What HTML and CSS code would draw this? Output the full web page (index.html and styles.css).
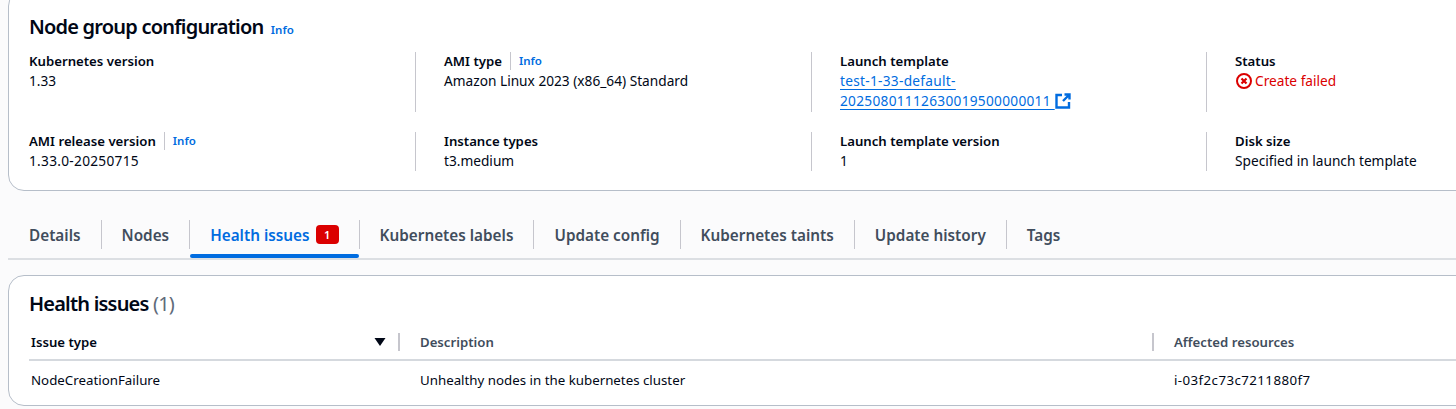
FILE: index.html
```html
<!DOCTYPE html>
<html lang="en">
<head>
<meta charset="utf-8">
<title>Node group configuration</title>
<link rel="stylesheet" href="styles.css">
</head>
<body>
<main class="page">
  <section class="card config">
    <h2 class="title">Node group configuration <a class="info title-info">Info</a></h2>
    <div class="grid row-one">
      <div class="cell first"><div class="label">Kubernetes version</div><div class="value">1.33</div></div>
      <div class="cell"><div class="label">AMI type<span class="pipe"></span><a class="info">Info</a></div><div class="value">Amazon Linux 2023 (x86_64) Standard</div></div>
      <div class="cell">
        <div class="label">Launch template</div>
        <div class="value"><a class="link num">test-1-33-default-<br>20250801112630019500000011 </a><svg class="ext" width="16" height="16" viewBox="0 0 16 16" fill="none" stroke="#006ce0" stroke-width="2.4"><path d="M7 2H1.5v12.5H14V9"/><path d="M9.5 1.5h5v5M14.5 1.5L8 8"/></svg></div>
      </div>
      <div class="cell">
        <div class="label">Status</div>
        <div class="value status"><svg class="status-icon" width="16" height="16" viewBox="0 0 16 16" fill="none" stroke="#db0000" stroke-width="2"><circle cx="8" cy="8" r="7"/><path d="M5.5 5.5l5 5M10.5 5.5l-5 5" stroke-width="2.2"/></svg>Create failed</div>
      </div>
    </div>
    <div class="grid row-two">
      <div class="cell first"><div class="label">AMI release version<span class="pipe"></span><a class="info">Info</a></div><div class="value num">1.33.0-20250715</div></div>
      <div class="cell"><div class="label">Instance types</div><div class="value">t3.medium</div></div>
      <div class="cell"><div class="label">Launch template version</div><div class="value">1</div></div>
      <div class="cell"><div class="label">Disk size</div><div class="value">Specified in launch template</div></div>
    </div>
  </section>

  <nav class="tabs">
    <a class="tab">Details</a>
    <a class="tab">Nodes</a>
    <a class="tab active">Health issues <span class="badge">1</span></a>
    <a class="tab">Kubernetes labels</a>
    <a class="tab">Update config</a>
    <a class="tab">Kubernetes taints</a>
    <a class="tab">Update history</a>
    <a class="tab">Tags</a>
  </nav>

  <section class="card issues">
    <h2 class="title issues-title">Health issues <span class="count">(1)</span></h2>
    <div class="table-head">
      <div class="col col-type">Issue type<svg class="caret" width="12" height="8" viewBox="0 0 12 8"><path d="M0.5 0h11L6 8z" fill="#000716"/></svg></div>
      <div class="col col-desc">Description</div>
      <div class="col col-res">Affected resources</div>
    </div>
    <div class="table-row">
      <div class="col col-type">NodeCreationFailure</div>
      <div class="col col-desc">Unhealthy nodes in the kubernetes cluster</div>
      <div class="col col-res num-wide">i-03f2c73c7211880f7</div>
    </div>
  </section>
</main>
</body>
</html>
```
FILE: styles.css
```css
* { box-sizing: border-box; }
html, body { margin: 0; height: 409px; overflow: hidden; }
body {
  background: #fbfbfc;
  color: #000716;
  font-family: "Noto Sans", "Open Sans", sans-serif;
  font-size: 14px;
  line-height: 20px;
}
.page { padding-left: 8px; margin-right: -40px; }
.card {
  background: #fff;
  border: 1px solid #b6bec9;
  border-radius: 16px;
}
.config {
  margin-top: -10px;
  height: 201px;
  padding: 22px 0 0 20px;
}
.title {
  margin: 0;
  font-size: 20px;
  line-height: 28px;
  font-weight: 600;
  letter-spacing: -0.8px;
}
.info { color: #006ce0; font-size: 11.5px; font-weight: 600; letter-spacing: 0; }
.title-info { margin-left: 3px; }
.grid {
  display: grid;
  grid-template-columns: 386px 396px 395px 1fr;
}
.row-one { margin-top: 8px; height: 60px; }
.row-two { margin-top: 20px; height: 39px; }
.cell { border-left: 1px solid #c6c6cd; padding-left: 28px; }
.cell.first { border-left: 0; padding-left: 0; }
.label { font-weight: 600; font-size: 13.2px; line-height: 18px; margin-bottom: 1px; display: flex; align-items: center; }
.value { font-size: 13.7px; line-height: 20px; }
.num { letter-spacing: 0.28px; }
.num-wide { letter-spacing: 0.42px; }
.pipe { display: inline-block; width: 1px; height: 18px; background: #c6c6cd; margin: 0 8px; }
.link { color: #006ce0; text-decoration: underline; text-underline-offset: 3px; }
.ext { vertical-align: -3px; }
.status { color: #db0000; display: flex; align-items: center; gap: 3px; }
.status-icon { margin-left: 1px; }
.tabs {
  display: flex;
  margin-top: 20px;
  height: 49px;
  border-bottom: 2px solid #dcdfe3;
  padding-top: 9px;
}
.tab {
  position: relative;
  display: flex;
  align-items: center;
  height: 29px;
  padding: 0 20px;
  border-right: 1px solid #c6c6cd;
  color: #414d5c;
  font-size: 15.3px;
  font-weight: 600;
  white-space: nowrap;
}
.tab:first-child { padding-left: 21px; }
.tab:last-child { border-right: 0; }
.tab.active { color: #006ce0; }
.tab.active::after {
  content: "";
  position: absolute;
  left: 0;
  right: 0;
  bottom: -9px;
  height: 4px;
  border-radius: 2px;
  background: #006ce0;
}
.badge {
  margin-left: 6px;
  width: 23px;
  height: 19px;
  border-radius: 4px;
  background: #db0000;
  color: #fff;
  font-size: 11px;
  line-height: 19px;
  text-align: center;
}
.issues {
  margin-top: 15px;
  height: 131px;
  padding: 14px 0 0 20px;
}
.count { color: #5f6b7a; font-weight: 400; }
.table-head, .table-row { display: flex; }
.table-head {
  margin-top: 15px;
  height: 28px;
  border-bottom: 2px solid #d5d9de;
  font-weight: 600;
  font-size: 13.2px;
  color: #414d5c;
}
.table-head .col { height: 18px; line-height: 18px; }
.table-head .col-type { color: #000716; }
.table-head .col-desc, .table-head .col-res { border-left: 2px solid #c6c6cd; }
.col { flex: none; padding-left: 2px; }
.col-type { width: 369px; position: relative; }
.col-desc { width: 754px; padding-left: 20px; }
.col-res { width: 300px; padding-left: 20px; }
.table-row .col-desc, .table-row .col-res { padding-left: 22px; }
.table-row { padding-top: 9px; font-size: 13.3px; }
.caret { position: absolute; right: 12px; top: 5px; }
```
